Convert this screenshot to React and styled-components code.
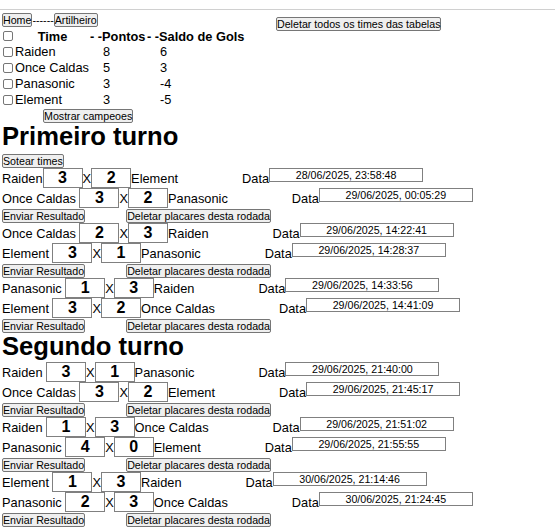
import React from 'react'
import styled, { createGlobalStyle } from 'styled-components'

const GlobalStyle = createGlobalStyle`
    html, body {
        margin: 0;
        padding: 0;
        overflow: hidden;
        background: #fff;
    }
    body {
        font-family: "Liberation Sans", Arial, sans-serif;
        font-size: 12.8px;
        color: #000;
    }
`

const TopLine = styled.div`
    height: 9px;
    border-bottom: 1px solid #d0d0d0;
`

const Page = styled.div`
    padding: 0 2px;
`

const Header = styled.div`
    display: flex;
    flex-direction: row;
`

const LeftCol = styled.div`
    width: 274px;
    display: flex;
    flex-direction: column;
    align-items: flex-start;
`

const Nav = styled.div`
    display: flex;
    align-items: center;
    margin-top: 3px;
    height: 14px;
    font-size: 10.67px;
`

const Button = styled.button`
    font-family: "Liberation Sans", Arial, sans-serif;
    font-size: 10.67px;
    line-height: 12px;
    padding: 0;
    margin: 0;
    margin-left: ${props => props.offset || 0}px;
    margin-top: ${props => props.top || 0}px;
    background: #efefef;
    color: #000;
    border: 1px solid #767676;
    border-radius: 2px;
    white-space: nowrap;
`

const Table = styled.table`
    border-collapse: collapse;
    border-spacing: 0;
    margin-top: 1px;
`

const Row = styled.tr`
    height: 16px;
`

const Th = styled.th`
    padding: 0;
    font-weight: 700;
    text-align: ${props => props.align || 'left'};
    white-space: nowrap;
`

const Td = styled.td`
    padding: 0 0 0 ${props => props.pad || 0}px;
    width: ${props => props.w ? props.w + 'px' : 'auto'};
    white-space: nowrap;
    line-height: 16px;
`

const Check = styled.input.attrs({ type: 'checkbox' })`
    appearance: none;
    display: block;
    width: 10px;
    height: 10px;
    margin: 0 2px 0 1px;
    border: 1px solid #767676;
    border-radius: 2px;
    background: #fff;
    box-sizing: border-box;
`

const Title = styled.h1`
    margin: 0;
    padding-bottom: ${props => props.gap}px;
    font-size: 25.6px;
    line-height: 26px;
    font-weight: 700;
`

const MatchRow = styled.div`
    display: flex;
    flex-direction: row;
    align-items: flex-start;
    height: 20px;
    white-space: nowrap;
`

const Label = styled.span`
    line-height: 18px;
    padding-top: 2px;
    margin-right: ${props => props.spaced ? 3.5 : 0}px;
`

const DataLabel = styled(Label)`
    margin-left: 64px;
`

const ScoreInput = styled.input`
    width: 40px;
    height: 20px;
    box-sizing: border-box;
    margin: 0;
    padding: 0 2px;
    border: 1px solid #808080;
    font-family: "Liberation Sans", Arial, sans-serif;
    font-size: 16px;
    font-weight: 700;
    text-align: center;
    color: #000;
    background: #fff;
`

const DateInput = styled.input`
    width: 154px;
    height: 14px;
    box-sizing: border-box;
    margin: 0;
    padding: 0;
    border: 1px solid #808080;
    font-family: "Liberation Sans", Arial, sans-serif;
    font-size: 10.67px;
    text-align: center;
    color: #000;
    background: #fff;
`

const ButtonRow = styled.div`
    display: flex;
    margin-top: 1px;
    height: 14px;
`

const teams = [
    { name: 'Raiden', pts: 8, sg: 6 },
    { name: 'Once Caldas', pts: 5, sg: 3 },
    { name: 'Panasonic', pts: 3, sg: -4 },
    { name: 'Element', pts: 3, sg: -5 },
]

const primeiro = [
    [
        ['Raiden', 3, 2, 'Element', '28/06/2025, 23:58:48', true],
        ['Once Caldas', 3, 2, 'Panasonic', '29/06/2025, 00:05:29'],
    ],
    [
        ['Once Caldas', 2, 3, 'Raiden', '29/06/2025, 14:22:41'],
        ['Element', 3, 1, 'Panasonic', '29/06/2025, 14:28:37'],
    ],
    [
        ['Panasonic', 1, 3, 'Raiden', '29/06/2025, 14:33:56'],
        ['Element', 3, 2, 'Once Caldas', '29/06/2025, 14:41:09'],
    ],
]

const segundo = [
    [
        ['Raiden', 3, 1, 'Panasonic', '29/06/2025, 21:40:00'],
        ['Once Caldas', 3, 2, 'Element', '29/06/2025, 21:45:17'],
    ],
    [
        ['Raiden', 1, 3, 'Once Caldas', '29/06/2025, 21:51:02'],
        ['Panasonic', 4, 0, 'Element', '29/06/2025, 21:55:55'],
    ],
    [
        ['Element', 1, 3, 'Raiden', '30/06/2025, 21:14:46'],
        ['Panasonic', 2, 3, 'Once Caldas', '30/06/2025, 21:24:45'],
    ],
]

const Match = ({ match }) => {
    const [home, g1, g2, away, date, tight] = match
    return (
        <MatchRow>
            <Label spaced={!tight}>{home}</Label>
            <ScoreInput defaultValue={g1} />
            <Label>X</Label>
            <ScoreInput defaultValue={g2} />
            <Label>{away}</Label>
            <DataLabel>Data</DataLabel>
            <DateInput readOnly value={date} />
        </MatchRow>
    )
}

const Rodada = ({ games }) => (
    <div>
        {games.map((m, i) => <Match key={i} match={m} />)}
        <ButtonRow>
            <Button>Enviar Resultado</Button>
            <Button offset={41}>Deletar placares desta rodada</Button>
        </ButtonRow>
    </div>
)

const App = () => {
    return (
        <>
            <GlobalStyle />
            <TopLine />
            <Page>
                <Header>
                    <LeftCol>
                        <Nav>
                            <Button>Home</Button>
                            <span>------</span>
                            <Button>Artilheiro</Button>
                        </Nav>
                        <Table>
                            <thead>
                                <Row>
                                    <Th><Check /></Th>
                                    <Th align="center">Time</Th>
                                    <Th>- -Pontos</Th>
                                    <Th>- -Saldo de Gols</Th>
                                </Row>
                            </thead>
                            <tbody>
                                {teams.map(t => (
                                    <Row key={t.name}>
                                        <Td w={13}><Check /></Td>
                                        <Td w={75}>{t.name}</Td>
                                        <Td w={44} pad={13}>{t.pts}</Td>
                                        <Td pad={13}>{t.sg}</Td>
                                    </Row>
                                ))}
                            </tbody>
                        </Table>
                        <Button offset={41} top={1}>Mostrar campeoes</Button>
                    </LeftCol>
                    <div>
                        <Button top={7}>Deletar todos os times das tabelas</Button>
                    </div>
                </Header>

                <Title gap={4}>Primeiro turno</Title>
                <Button>Sotear times</Button>
                {primeiro.map((r, i) => <Rodada key={i} games={r} />)}

                <Title gap={3}>Segundo turno</Title>
                {segundo.map((r, i) => <Rodada key={i} games={r} />)}
            </Page>
        </>
    )
}

export default App
